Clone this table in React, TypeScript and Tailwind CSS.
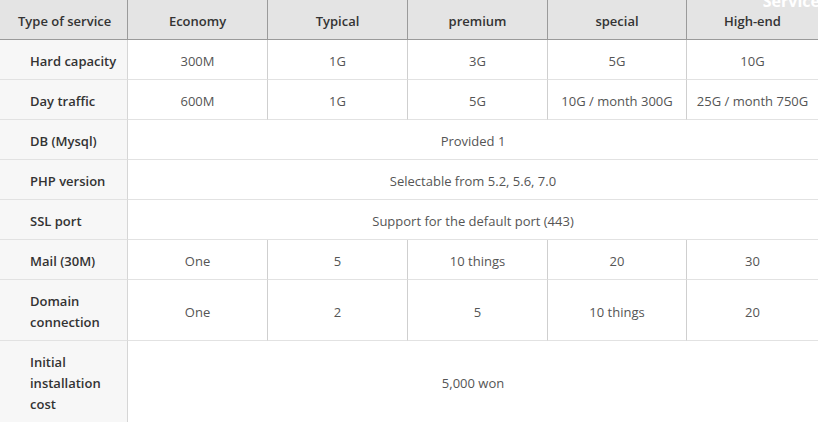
import React from "react";

const plans = ["Economy", "Typical", "premium", "special", "High-end"];

type Row =
  | { label: React.ReactNode; values: string[] }
  | { label: React.ReactNode; span: string };

const rows: Row[] = [
  { label: "Hard capacity", values: ["300M", "1G", "3G", "5G", "10G"] },
  { label: "Day traffic", values: ["600M", "1G", "5G", "10G / month 300G", "25G / month 750G"] },
  { label: "DB (Mysql)", span: "Provided 1" },
  { label: "PHP version", span: "Selectable from 5.2, 5.6, 7.0" },
  { label: "SSL port", span: "Support for the default port (443)" },
  { label: "Mail (30M)", values: ["One", "5", "10 things", "20", "30"] },
  { label: "Domain connection", values: ["One", "2", "5", "10 things", "20"] },
  { label: "Initial installation cost", span: "5,000 won" },
];

export default function App() {
  return (
    <div
      className="relative w-[818px] h-[422px] overflow-hidden bg-white"
      style={{ fontFamily: '"Open Sans", "Noto Sans", sans-serif' }}
    >
      <table className="w-[818px] table-fixed border-separate border-spacing-0 text-[13px] leading-[21px]">
        <colgroup>
          <col className="w-[128px]" />
          <col className="w-[140px]" />
          <col className="w-[140px]" />
          <col className="w-[140px]" />
          <col className="w-[139px]" />
          <col className="w-[131px]" />
        </colgroup>
        <thead>
          <tr className="bg-[#e4e4e4]">
            <th className="pt-[11px] pb-[7px] pl-[18px] pr-0 text-left font-semibold text-[#333] border-b border-r border-[#9a9a9a] whitespace-nowrap">
              Type of service
            </th>
            {plans.map((p, i) => (
              <th
                key={p}
                className={
                  i < plans.length - 1
                    ? "pt-[11px] pb-[7px] px-2 text-center font-semibold text-[#333] border-b border-r border-[#9a9a9a]"
                    : "pt-[11px] pb-[7px] px-2 text-center font-semibold text-[#333] border-b border-[#9a9a9a]"
                }
              >
                {p}
              </th>
            ))}
          </tr>
        </thead>
        <tbody>
          {rows.map((r, ri) => (
            <tr key={ri}>
              <td className="pt-[11px] pb-[7px] pl-[30px] pr-[8px] text-left font-semibold text-[#333] bg-[#f7f7f7] border-b border-r border-b-[#e2e2e2] border-r-[#d6d6d6]">
                {r.label}
              </td>
              {"span" in r ? (
                <td
                  colSpan={5}
                  className="pt-[11px] pb-[7px] px-2 text-center text-[#555] border-b border-[#e2e2e2]"
                >
                  {r.span}
                </td>
              ) : (
                r.values.map((v, vi) => (
                  <td
                    key={vi}
                    className={
                      vi < r.values.length - 1
                        ? "pt-[11px] pb-[7px] px-1 text-center text-[#555] whitespace-nowrap border-b border-r border-b-[#e2e2e2] border-r-[#cfcfcf]"
                        : "pt-[11px] pb-[7px] px-1 text-center text-[#555] whitespace-nowrap border-b border-[#e2e2e2]"
                    }
                  >
                    {v}
                  </td>
                ))
              )}
            </tr>
          ))}
        </tbody>
      </table>
      <div className="absolute right-[-2px] top-[-9px] text-[16px] font-bold text-white leading-[20px]">
        Service
      </div>
    </div>
  );
}
